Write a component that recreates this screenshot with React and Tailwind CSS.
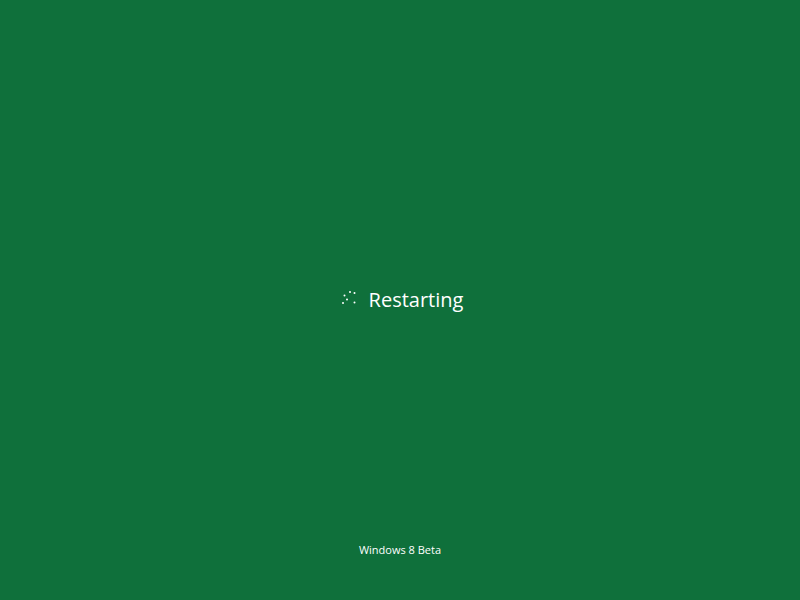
import React from "react";

export default function App() {
  // spinner dots around a small ring
  const dots = [
    [13, 5],
    [17.5, 6],
    [7.5, 8.5],
    [10, 12.5],
    [6, 16],
    [17.5, 15.5],
  ];

  return (
    <div
      className="w-[800px] h-[600px] bg-[#0f703b] flex flex-col items-center text-white"
      style={{ fontFamily: '"Open Sans", "Noto Sans", sans-serif' }}
    >
      <div className="flex-1" />
      <div className="flex items-center gap-[8px]">
        <svg width="24" height="24" viewBox="0 0 24 24" className="mt-[-2px]">
          {dots.map(([x, y], i) => (
            <circle key={i} cx={x} cy={y} r="1" fill="#fff" />
          ))}
        </svg>
        <span className="text-[20px] leading-none">Restarting</span>
      </div>
      <div className="flex-1 flex flex-col justify-end items-center">
        <div className="pb-[45px]">
          <div className="text-[11px] leading-none">Windows 8 Beta</div>
        </div>
      </div>
    </div>
  );
}
